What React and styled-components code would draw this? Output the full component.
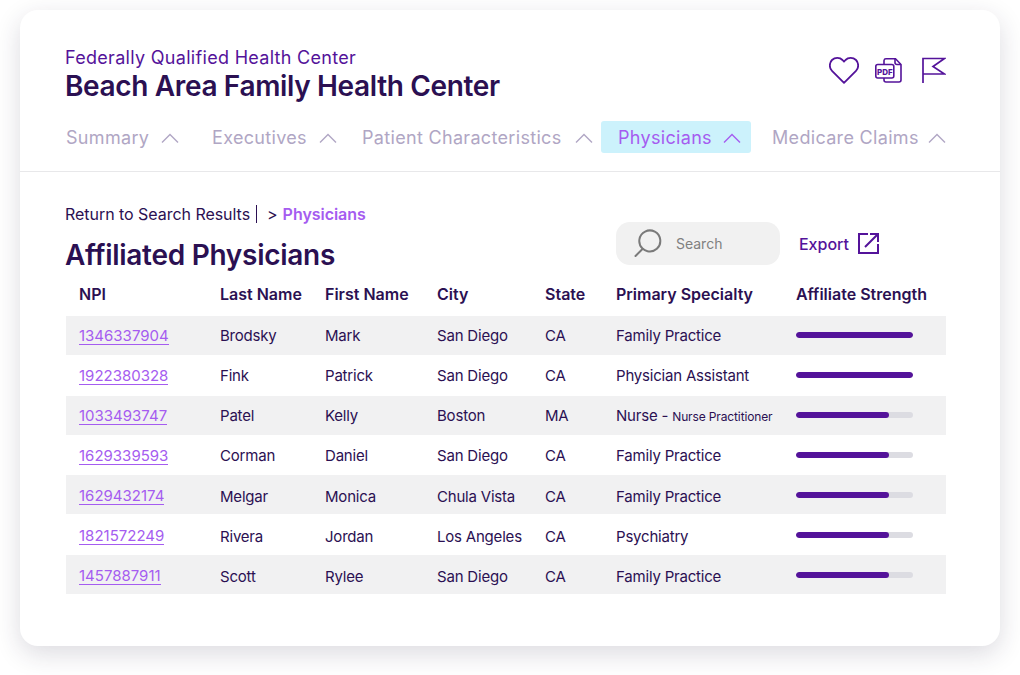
import React from 'react';
import styled, { createGlobalStyle } from 'styled-components';

const Global = createGlobalStyle`
  html, body { margin: 0; padding: 0; background: #fff; }
  body { font-family: Inter, "Noto Sans", sans-serif; }
`;
const Page = styled.div`
  width: 1020px; height: 675px; box-sizing: border-box; padding: 10px 20px 29px; overflow: hidden;
`;
const Card = styled.main`
  height: 636px; background: #fff; border-radius: 18px;
  box-shadow: 0 8px 26px rgba(40, 30, 60, .16);
  display: flex; flex-direction: column;
`;
const Header = styled.header`
  height: 162px; box-sizing: border-box; padding: 37px 54px 0 45px; border-bottom: 1px solid #e8e8ea;
`;
const TitleRow = styled.div`
  display: flex; justify-content: space-between; align-items: flex-start; height: 74px;
`;
const Titles = styled.div`display: flex; flex-direction: column;`;
const Kicker = styled.div`
  font-size: 18px; line-height: 22px; color: #54139a; letter-spacing: 0.3px;
`;
const Title = styled.h1`
  margin: 0; font-size: 28px; line-height: 34px; font-weight: 600; color: #2b1052; letter-spacing: -0.35px;
`;
const Actions = styled.div`
  display: flex; align-items: flex-start; padding-top: 10px;
`;
const HeartSvg = styled.svg`margin-right: 16px;`;
const PdfSvg = styled.svg`margin-right: 20px;`;
const Tabs = styled.nav`display: flex; align-items: center; height: 32px;`;
const Tab = styled.div`
  display: flex; align-items: center; height: 32px; box-sizing: border-box; border-radius: 3px;
  margin-left: ${p => p.$ml}px; width: ${p => p.$w}px; padding-left: ${p => p.$pl}px;
  font-size: 18px; letter-spacing: 0.32px; color: ${p => (p.$active ? '#a55cf0' : '#b0a6c4')};
  background: ${p => (p.$active ? '#ccf2fc' : 'transparent')};
  justify-content: space-between; padding-right: ${p => p.$pr}px;
`;
const ChevronSvg = styled.svg`margin-top: 2px;`;
const Body = styled.section`
  flex: 1; padding: 32px 54px 0 45px; display: flex; flex-direction: column;
`;
const Crumbs = styled.div`
  display: flex; align-items: center; font-size: 16px; line-height: 20px; color: #2b1052; height: 20px; letter-spacing: -0.04px;
`;
const Bar = styled.span`
  width: 1px; height: 18px; background: #2b1052; margin: 0 10px 0 6px;
`;
const CrumbActive = styled.strong`color: #a55cf0; font-weight: 600; margin-left: 5px;`;
const TitleBar = styled.div`
  display: flex; justify-content: space-between; height: 61px;
`;
const SectionTitle = styled.h2`
  margin: 14px 0 0; font-size: 28px; line-height: 34px; font-weight: 600; color: #2b1052; letter-spacing: -0.28px;
`;
const Tools = styled.div`
  display: flex; align-items: center; height: 43px; margin-right: 67px; margin-top: -2px;
`;
const SearchBox = styled.div`
  width: 164px; height: 43px; box-sizing: border-box; border-radius: 14px; background: #f1f1f1;
  display: flex; align-items: center; padding-left: 18px; gap: 13px; color: #808080; font-size: 14px;
`;
const ExportLink = styled.div`
  display: flex; align-items: center; gap: 9px; margin-left: 19px; color: #54139a; font-size: 16px; font-weight: 500;
`;
const Cols = '140px 105px 112px 108px 71px 180px 150px';
const HeadRow = styled.div`
  display: grid; grid-template-columns: ${Cols}; box-sizing: border-box; padding-left: 14px; margin-left: 1px;
  height: 22px; align-items: start; font-size: 16px; line-height: 20px; font-weight: 600; color: #2b1052;
  margin-top: -1px; margin-bottom: 10px;
`;
const HeadNpi = styled.span`margin-left: -1px;`;
const Rows = styled.div`display: flex; flex-direction: column; gap: 0.83px; margin-left: 1px;`;
const Row = styled.div`
  display: grid; grid-template-columns: ${Cols}; box-sizing: border-box; padding-left: 14px;
  height: 39px; align-items: center; font-size: 15px; letter-spacing: -0.2px; color: #2b1052;
  padding-top: ${p => p.$i * 0.6}px;
  background: ${p => (p.$i % 2 === 0 ? '#f1f1f2' : '#fff')};
`;
const Npi = styled.span`
  color: #a55cf0; justify-self: start; border-bottom: 1px solid #a55cf0; line-height: 17px; margin-left: -1px; letter-spacing: 0;
`;
const Small = styled.span`font-size: 12px; letter-spacing: -0.13px;`;
const Track = styled.div`
  width: 117px; height: 6px; border-radius: 3px; background: #dcdce2; overflow: hidden; margin-top: -2px;
`;
const Fill = styled.div`height: 100%; border-radius: 3px; background: #54139a;`;

const Chevron = ({ color }) => (
  <ChevronSvg width="18" height="10" viewBox="0 0 18 10" fill="none">
    <path d="M1 9.500 9 1.500 17 9.500" stroke={color} strokeWidth="1.4" />
  </ChevronSvg>
);
const Heart = () => (
  <HeartSvg width="30" height="27" viewBox="0 0 30 27" fill="none">
    <path d="M15 25.800 3 13.900C.1 11 .1 5.900 3 3 6 .2 10.800.300 13.500 3L15 4.600 16.500 3C19.200.3 24 .2 27 3c2.900 2.900 2.900 8 0 10.900Z" stroke="#54139a" strokeWidth="1.8" strokeLinejoin="round" />
  </HeartSvg>
);
const Pdf = () => (
  <PdfSvg width="27" height="26" viewBox="0 0 27 26" fill="none" stroke="#54139a" strokeWidth="1.6">
    <path d="M9 7V3.500A2 2 0 0 1 11 1.800h9.500L26 7.500V23a2 2 0 0 1-2 2H11a2 2 0 0 1-2-2v-2" />
    <path d="M20 1.800V5.500a2 2 0 0 0 2 2h4" />
    <rect x="0.800" y="7.500" width="18" height="13.500" rx="2" />
    <text x="9.800" y="17.600" textAnchor="middle" fontFamily="Inter" fontSize="8" fontWeight="800" fill="#54139a" stroke="none">PDF</text>
  </PdfSvg>
);
const Flag = () => (
  <svg width="24" height="26" viewBox="0 0 24 26" fill="none" stroke="#54139a" strokeWidth="1.7">
    <path d="M1 26V1.500h21.500L11 9.500l11.500 7.500H1" />
  </svg>
);
const SearchIcon = () => (
  <svg width="29" height="29" viewBox="0 0 29 29" fill="none" stroke="#7a7a7a" strokeWidth="2">
    <path d="M8.500 19.500A10.500 10.500 0 1 1 13.500 22.200 10.500 10.500 0 0 1 8.500 19.500 Z" />
    <path d="M8.500 20 1.500 27" strokeLinecap="round" />
  </svg>
);
const ExportIcon = () => (
  <svg width="21" height="21" viewBox="0 0 21 21" fill="none" stroke="#54139a" strokeWidth="2">
    <path d="M10 1H1v19h19v-9" />
    <path d="M7 14 20 1M12 1h8v8" />
  </svg>
);

const tabs = [
  { label: 'Summary', ml: 0, w: 114, pl: 1, pr: 0 },
  { label: 'Executives', ml: 33, w: 125, pl: 0, pr: 0 },
  { label: 'Patient Characteristics', ml: 25, w: 231, pl: 0, pr: 0 },
  { label: 'Physicians', ml: 8, w: 150, pl: 17, pr: 10, active: true },
  { label: 'Medicare Claims', ml: 21, w: 174, pl: 0, pr: 0 },
];
const data = [
  ['1346337904', 'Brodsky', 'Mark', 'San Diego', 'CA', 'Family Practice', 100],
  ['1922380328', 'Fink', 'Patrick', 'San Diego', 'CA', 'Physician Assistant', 100],
  ['1033493747', 'Patel', 'Kelly', 'Boston', 'MA', null, 79.5],
  ['1629339593', 'Corman', 'Daniel', 'San Diego', 'CA', 'Family Practice', 79.5],
  ['1629432174', 'Melgar', 'Monica', 'Chula Vista', 'CA', 'Family Practice', 79.5],
  ['1821572249', 'Rivera', 'Jordan', 'Los Angeles', 'CA', 'Psychiatry', 79.5],
  ['1457887911', 'Scott', 'Rylee', 'San Diego', 'CA', 'Family Practice', 79.5],
];

export default function App() {
  return (
    <Page>
      <Global />
      <Card>
        <Header>
          <TitleRow>
            <Titles>
              <Kicker>Federally Qualified Health Center</Kicker>
              <Title>Beach Area Family Health Center</Title>
            </Titles>
            <Actions>
              <Heart />
              <Pdf />
              <Flag />
            </Actions>
          </TitleRow>
          <Tabs>
            {tabs.map(t => (
              <Tab key={t.label} $ml={t.ml} $w={t.w} $pl={t.pl} $pr={t.pr} $active={t.active}>
                {t.label}
                <Chevron color={t.active ? '#a55cf0' : '#b0a6c4'} />
              </Tab>
            ))}
          </Tabs>
        </Header>
        <Body>
          <Crumbs>
            Return to Search Results<Bar />&gt;<CrumbActive>Physicians</CrumbActive>
          </Crumbs>
          <TitleBar>
            <SectionTitle>Affiliated Physicians</SectionTitle>
            <Tools>
              <SearchBox><SearchIcon />Search</SearchBox>
              <ExportLink>Export <ExportIcon /></ExportLink>
            </Tools>
          </TitleBar>
          <HeadRow>
            <HeadNpi>NPI</HeadNpi><span>Last Name</span><span>First Name</span><span>City</span><span>State</span><span>Primary Specialty</span><span>Affiliate Strength</span>
          </HeadRow>
          <Rows>
            {data.map((r, i) => (
              <Row key={r[0]} $i={i}>
                <Npi>{r[0]}</Npi>
                <span>{r[1]}</span>
                <span>{r[2]}</span>
                <span>{r[3]}</span>
                <span>{r[4]}</span>
                <span>{r[5] || <>Nurse - <Small>Nurse Practitioner</Small></>}</span>
                <Track><Fill style={{ width: `${r[6]}%` }} /></Track>
              </Row>
            ))}
          </Rows>
        </Body>
      </Card>
    </Page>
  );
}
